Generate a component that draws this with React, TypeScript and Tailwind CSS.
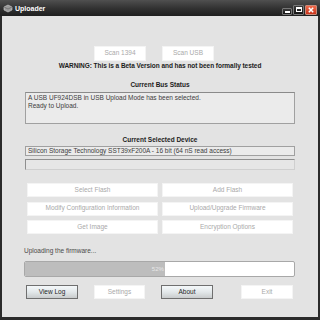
import React from "react";

const font = { fontFamily: '"Liberation Sans", Arial, sans-serif' };

function FlatBtn({ label, className = "" }: { label: string; className?: string }) {
  return (
    <div
      className={`flex items-center justify-center bg-white border border-[#f4f4f4] text-[#a9a9a9] text-[6.5px] leading-none ${className}`}
    >
      {label}
    </div>
  );
}

function RaisedBtn({ label, className = "" }: { label: string; className?: string }) {
  return (
    <div
      className={`flex items-center justify-center border border-[#6f6f6f] bg-gradient-to-b from-[#f4f8fa] via-[#e3e8ea] to-[#c9cccd] text-[#1e1e1e] text-[6.5px] leading-none ${className}`}
    >
      {label}
    </div>
  );
}

export default function App() {
  return (
    <div className="w-[320px] h-[320px] bg-[#2b2b2b] flex flex-col overflow-hidden" style={font}>
      {/* Title bar */}
      <div className="h-[16px] flex items-center bg-gradient-to-b from-[#505050] via-[#333333] to-[#1f1f1f] relative">
        <svg width="10" height="9" viewBox="0 0 10 9" className="ml-[3px]">
          <path d="M1 3 L5 1 L9 3 L9 6 L5 8 L1 6 Z" fill="#9a9a9a" stroke="#d0d0d0" strokeWidth="0.6" />
          <path d="M1 3 L5 5 L9 3" fill="none" stroke="#5a5a5a" strokeWidth="0.6" />
        </svg>
        <span className="ml-[2px] text-white font-bold text-[7px] leading-none">Uploader</span>
        <div className="ml-auto mr-[3px] flex items-end gap-[1px] h-[11px] mt-[2px]">
          <div className="w-[10px] h-[7px] rounded-[1px] border border-[#777] bg-gradient-to-b from-[#3a3a3a] to-[#151515] flex items-end justify-center pb-[1px]">
            <div className="w-[5px] h-[2px] bg-white" />
          </div>
          <div className="w-[11px] h-[10px] rounded-[1px] border border-[#777] bg-gradient-to-b from-[#3a3a3a] to-[#151515] flex items-center justify-center">
            <div className="w-[6px] h-[5px] border border-white border-t-2" />
          </div>
          <div className="w-[12px] h-[10px] rounded-[1px] border border-[#c98a7a] bg-gradient-to-b from-[#f06a4a] to-[#c8321a] flex items-center justify-center">
            <svg width="6" height="6" viewBox="0 0 6 6">
              <path d="M0.8 0.8 L5.2 5.2 M5.2 0.8 L0.8 5.2" stroke="white" strokeWidth="1.5" />
            </svg>
          </div>
        </div>
      </div>

      {/* Content */}
      <div className="flex-1 mx-[2px] mb-[3px] bg-[#e3e3e3] flex flex-col">
        <div className="flex mt-[30px] ml-[92px] gap-[16px]">
          <FlatBtn label="Scan 1394" className="w-[52px] h-[15px]" />
          <FlatBtn label="Scan USB" className="w-[52px] h-[15px]" />
        </div>
        <div className="mt-[1px] h-[8px] text-center font-bold text-[6.5px] leading-[8px] text-[#1c1c1c] tracking-[-0.05px]">
          WARNING: This is a Beta Version and has not been formally tested
        </div>

        <div className="mt-[11px] h-[8px] text-center font-bold text-[6.5px] leading-[8px] text-[#1c1c1c]">
          Current Bus Status
        </div>
        <div className="mt-[3px] mx-[23px] h-[32px] border border-[#a0a0a0] border-t-[#8a8a8a] bg-[#ebebeb] px-[2px] pt-[1px] text-[6.5px] leading-[8px] text-[#3c3c3c]">
          <div>A USB UF924DSB in USB Upload Mode has been selected.</div>
          <div>Ready to Upload.</div>
        </div>

        <div className="mt-[12px] h-[8px] text-center font-bold text-[6.5px] leading-[8px] text-[#1c1c1c]">
          Current Selected Device
        </div>
        <div className="mt-[2px] mx-[23px] h-[10px] border border-[#a0a0a0] bg-[#ebebeb] px-[2px] text-[6.5px] leading-[8px] text-[#3c3c3c]">
          Silicon Storage Technology SST39xF200A - 16 bit (64 nS read access)
        </div>
        <div className="mt-[3px] mx-[23px] h-[11px] border border-[#8f8f8f] border-b-[#cfcfcf] border-r-[#cfcfcf] bg-[#e6e6e6]" />

        <div className="mt-[13px] mx-[25px] grid grid-cols-2 gap-x-[4px] gap-y-[4.5px]">
          <FlatBtn label="Select Flash" className="h-[14px]" />
          <FlatBtn label="Add Flash" className="h-[14px]" />
          <FlatBtn label="Modify Configuration Information" className="h-[14px]" />
          <FlatBtn label="Upload/Upgrade Firmware" className="h-[14px]" />
          <FlatBtn label="Get Image" className="h-[14px]" />
          <FlatBtn label="Encryption Options" className="h-[14px]" />
        </div>

        <div className="mt-[13px] ml-[22px] h-[8px] text-[6.5px] leading-[8px] text-[#4a4a4a]">
          Uploading the firmware...
        </div>
        <div className="mt-[6px] ml-[22px] mr-[23px] h-[16px] rounded-[2px] border border-[#a8a8a8] bg-white flex overflow-hidden">
          <div className="w-[52%] h-full bg-[#bdbdbd] flex items-center justify-end pr-[1px] text-[6px] text-[#e8e8e8]">
            52%
          </div>
        </div>

        <div className="mt-[8px] flex items-center">
          <RaisedBtn label="View Log" className="ml-[24px] w-[52px] h-[14px]" />
          <FlatBtn label="Settings" className="ml-[16px] w-[51px] h-[14px]" />
          <RaisedBtn label="About" className="ml-[16px] w-[52px] h-[14px]" />
          <FlatBtn label="Exit" className="ml-[28px] w-[52px] h-[14px]" />
        </div>
      </div>
    </div>
  );
}
